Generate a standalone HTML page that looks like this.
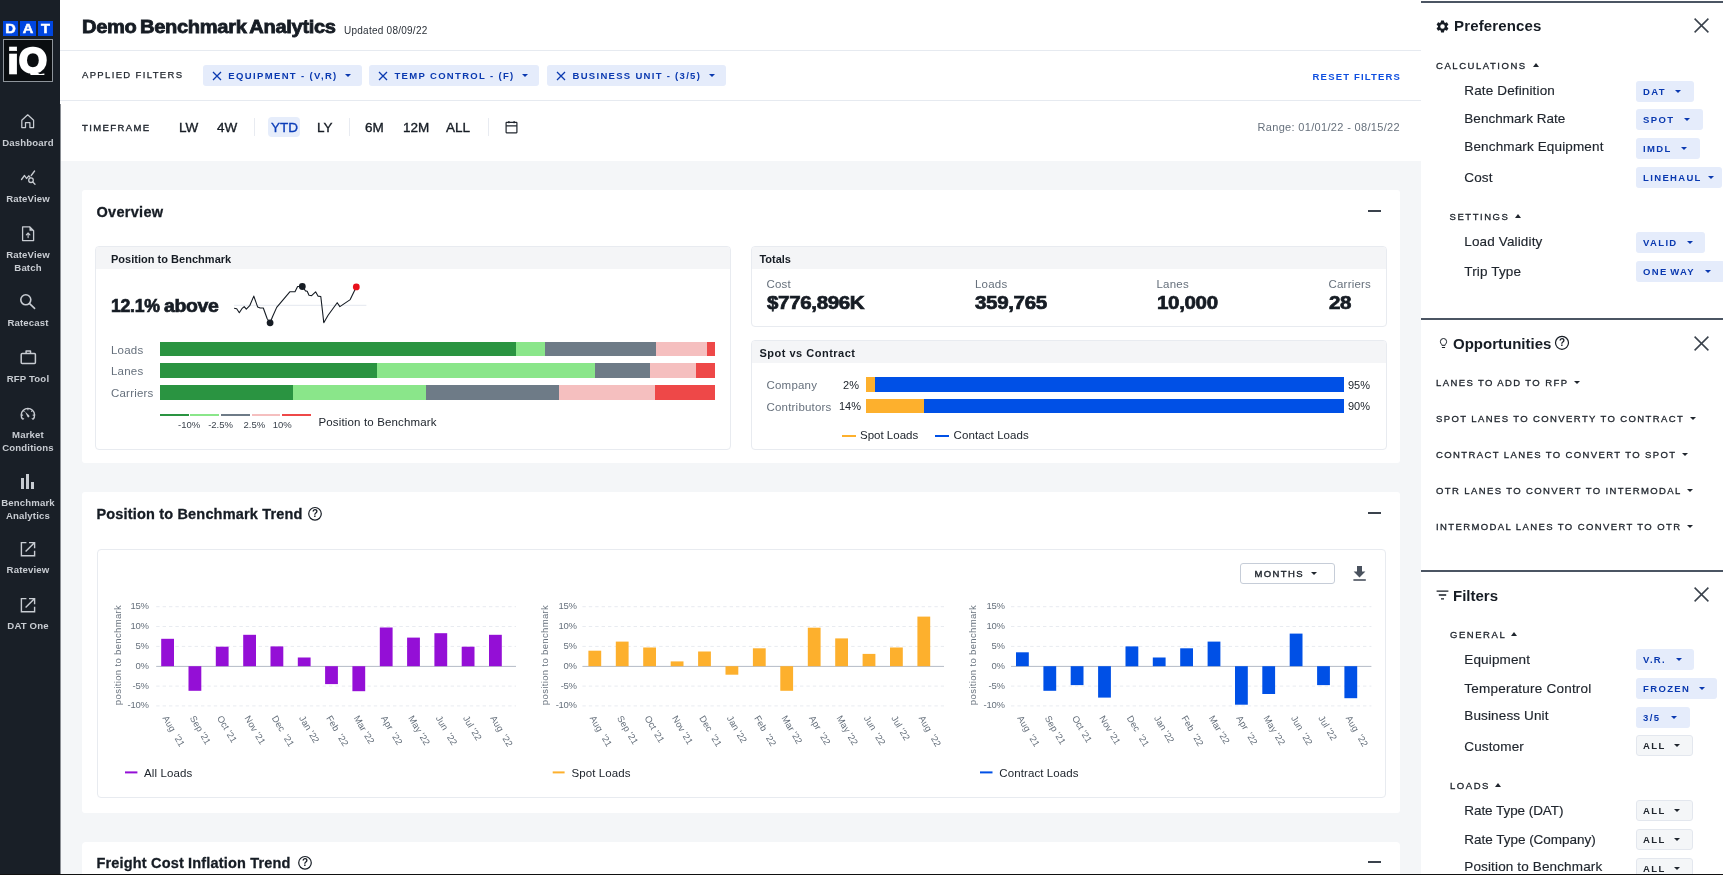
<!DOCTYPE html>
<html lang="en">
<head>
<meta charset="utf-8">
<title>Demo Benchmark Analytics</title>
<style>
*{box-sizing:border-box;margin:0;padding:0}
html,body{width:1723px;height:875px;overflow:hidden;background:#f4f6f8;font-family:"Liberation Sans",Arial,sans-serif;color:#161c24}
#app{will-change:transform;position:relative;width:1723px;height:875px;overflow:hidden}
.abs{position:absolute}
.t{position:absolute;white-space:nowrap;line-height:1}
/* sidebar */
#side{position:absolute;left:0;top:0;width:60px;height:875px;background:#191f27}
.nav{position:absolute;left:0;width:56px;text-align:center;color:#c8ccd2;font-weight:700;font-size:9.6px;line-height:13px;letter-spacing:.15px}
.nico{position:absolute;left:0;width:56px;text-align:center}
.nico svg{display:inline-block}
/* header */
#head{position:absolute;left:60px;top:0;width:1361px;height:161px;background:#fff}
.hr{position:absolute;left:0;width:1361px;height:1px;background:#e6eaf0}
.caps{font-size:9.5px;letter-spacing:1.55px;font-weight:700;color:#20262e}
.chip{position:absolute;height:21px;border-radius:3px;background:#e5ecfb;color:#0a39b0;font-size:9.5px;font-weight:700;letter-spacing:1.33px;line-height:21px;white-space:nowrap}
.chipg{position:absolute;height:21px;border-radius:3px;background:#f4f6f8;border:1px solid #e3e7ee;color:#20262e;font-size:9.5px;font-weight:700;letter-spacing:1.5px;line-height:19px;white-space:nowrap}
.tf{position:absolute;font-size:13.5px;color:#161c24;-webkit-text-stroke:.35px #161c24;top:119.5px;line-height:15px;white-space:nowrap}
.vdiv{position:absolute;width:1px;height:18px;top:118px;background:#e8ebf1}
.dn{position:absolute;top:9px;width:0;height:0;border-left:3.3px solid transparent;border-right:3.3px solid transparent;border-top:3.8px solid currentColor}
.up{position:absolute;width:0;height:0;border-left:3.5px solid transparent;border-right:3.5px solid transparent;border-bottom:4px solid currentColor}
/* cards */
.card{position:absolute;background:#fff;border-radius:3px}
.sub{position:absolute;background:#fff;border:1px solid #e8ebf0;border-radius:4px;overflow:hidden}
.subh{position:absolute;left:0;top:0;right:0;height:22px;background:#f4f5f7}
.h2{font-size:14.5px;font-weight:700;color:#161c24;letter-spacing:.3px;-webkit-text-stroke:.3px #161c24}
.sh{font-size:11px;font-weight:700;color:#161c24}
.lbl{font-size:11.5px;color:#66707c;letter-spacing:.2px}
.big{font-size:18px;font-weight:700;color:#161c24;letter-spacing:-.3px;-webkit-text-stroke:.7px #161c24;transform-origin:0 50%;transform:scaleX(1.14)}
/* right panel */
#rp{position:absolute;left:1421px;top:0;width:302px;height:875px;background:#fff}
.rb{position:absolute;left:0;width:302px;height:2px;background:#4b5563}
.rl{font-size:13.5px;color:#20262e;letter-spacing:.14px;-webkit-text-stroke:.15px #20262e}
.rt{font-size:15px;font-weight:700;color:#161c24}
</style>
</head>
<body>
<div id="app">

<!-- SIDEBAR -->
<div id="side">
<div class="abs" style="left:3px;top:21px;width:15px;height:15px;background:#0046e0"></div>
<div class="abs" style="left:20px;top:21px;width:16px;height:15px;background:#0046e0"></div>
<div class="abs" style="left:38px;top:21px;width:15px;height:15px;background:#0046e0"></div>
<div class="t" style="left:3px;top:22.3px;width:15px;text-align:center;font-size:13px;font-weight:700;color:#fff;-webkit-text-stroke:.5px #fff;transform:scaleX(1.12)">D</div>
<div class="t" style="left:20px;top:22.3px;width:16px;text-align:center;font-size:13px;font-weight:700;color:#fff;-webkit-text-stroke:.5px #fff;transform:scaleX(1.12)">A</div>
<div class="t" style="left:38px;top:22.3px;width:15px;text-align:center;font-size:13px;font-weight:700;color:#fff;-webkit-text-stroke:.5px #fff;transform:scaleX(1.12)">T</div>
<div class="abs" style="left:3px;top:39px;width:50px;height:43px;background:#0a0d10;border:1px solid #8e949b"></div>
<!--IQ--><div class="t" style="left:5.8px;top:43.5px;font-size:36px;font-weight:700;color:#fff;-webkit-text-stroke:0.5px #fff;transform-origin:0 0;transform:scaleX(1.42)">i</div><div class="abs" style="left:4px;top:40px;width:48px;height:34.6px;overflow:hidden"><div class="t" style="left:14.8px;top:2.8px;font-size:34.5px;font-weight:700;color:#fff;-webkit-text-stroke:2.5px #fff;transform-origin:0 0;transform:scaleX(1.04)">Q</div></div><!--/IQ-->

<!-- nav icons -->
<svg class="abs" style="left:20px;top:113px" width="16" height="16" viewBox="0 0 16 16" fill="none" stroke="#c8ccd2" stroke-width="1.25" stroke-linejoin="round"><path d="M1.8 7.2 L7.7 1.8 L13.6 7.2 V14.5 H9.9 V9.6 H5.5 V14.5 H1.8 Z"/></svg>
<div class="nav" style="top:136px">Dashboard</div>

<svg class="abs" style="left:20px;top:169px" width="17" height="17" viewBox="0 0 17 17" fill="none" stroke="#c8ccd2" stroke-width="1.3" stroke-linecap="round" stroke-linejoin="round"><path d="M1.5 10.5 L4.5 6.5 L6.5 9.5 L8.8 6.8 L10 8.2 M11.2 6.5 L14.6 2"/><circle cx="11" cy="11.2" r="2.3"/><path d="M12.8 13 L15 15.2"/></svg>
<div class="nav" style="top:192px">RateView</div>

<svg class="abs" style="left:21px;top:225px" width="14" height="17" viewBox="0 0 14 17" fill="none" stroke="#c8ccd2" stroke-width="1.3" stroke-linejoin="round" stroke-linecap="round"><path d="M1.6 1.8 H8.6 L12.6 5.8 V15.6 H1.6 Z"/><path d="M8.8 2.2 V5.6 H12.2 Z" fill="#c8ccd2" stroke-width=".6"/><path d="M7.1 12.6 V8.2 M5.3 9.8 L7.1 8 L8.9 9.8" stroke-width="1.1"/></svg>
<div class="nav" style="top:248px">RateView<br>Batch</div>

<svg class="abs" style="left:19px;top:293px" width="17" height="17" viewBox="0 0 17 17" fill="none" stroke="#c8ccd2" stroke-width="1.6" stroke-linecap="round"><circle cx="6.8" cy="6.8" r="5"/><path d="M10.6 10.6 L15.6 15.4"/></svg>
<div class="nav" style="top:316px">Ratecast</div>

<svg class="abs" style="left:20px;top:349px" width="17" height="16" viewBox="0 0 17 16" fill="none" stroke="#c8ccd2" stroke-width="1.5" stroke-linejoin="round"><rect x="1.2" y="4.6" width="14.2" height="10" rx="1"/><path d="M6.1 4.6 V2 H10.5 V4.6"/></svg>
<div class="nav" style="top:372px">RFP Tool</div>

<svg class="abs" style="left:20px;top:406.6px" width="16" height="16" viewBox="0 0 16 16" fill="none" stroke="#c8ccd2" stroke-width="1.4"><path d="M2.77 12.41 A6.70 6.70 0 1 1 13.03 12.41"/><path d="M1.20 8.10 L3.10 8.10 M3.16 3.36 L4.51 4.71 M7.90 1.40 L7.90 3.30 M12.64 3.36 L11.29 4.71 M14.60 8.10 L12.70 8.10 M2.77 12.41 L3.99 11.38 M13.03 12.41 L11.81 11.38 " stroke-width="1.1"/><path d="M5.0 4.6 L9.2 8.6 A1.1 1.1 0 0 1 7.6 10.1 Z" fill="#c8ccd2" stroke="none"/></svg>
<div class="nav" style="top:428px">Market<br>Conditions</div>

<div class="abs" style="left:21px;top:478px;width:3px;height:10.5px;background:#c8ccd2"></div>
<div class="abs" style="left:26px;top:474px;width:3px;height:14.5px;background:#c8ccd2"></div>
<div class="abs" style="left:31px;top:482px;width:3px;height:6.5px;background:#c8ccd2"></div>
<div class="nav" style="top:496px">Benchmark<br>Analytics</div>

<svg class="abs" style="left:20px;top:541px" width="16" height="16" viewBox="0 0 16 16" fill="none" stroke="#c8ccd2" stroke-width="1.4"><path d="M6.4 1.6 H1.4 V14.8 H14.6 V9.8"/><path d="M9 1.6 H14.6 V7.2 M14.4 1.8 L5.6 10.6"/></svg>
<div class="nav" style="top:563px">Rateview</div>

<svg class="abs" style="left:20px;top:597px" width="16" height="16" viewBox="0 0 16 16" fill="none" stroke="#c8ccd2" stroke-width="1.4"><path d="M6.4 1.6 H1.4 V14.8 H14.6 V9.8"/><path d="M9 1.6 H14.6 V7.2 M14.4 1.8 L5.6 10.6"/></svg>
<div class="nav" style="top:619px">DAT One</div>
</div>

<!-- HEADER -->
<div id="head">
<div class="t" id="title" style="left:21.6px;top:18.2px;font-size:18.5px;font-weight:700;letter-spacing:-0.3px;word-spacing:-1.5px;color:#161c24;-webkit-text-stroke:0.8px #161c24;transform-origin:0 50%;transform:scaleX(1.085)">Demo Benchmark Analytics</div>
<div class="t" id="upd" style="left:284px;top:26px;font-size:10px;letter-spacing:.25px;color:#2a3038">Updated 08/09/22</div>
<div class="hr" style="top:50px"></div>
<div class="t caps" id="af" style="left:22px;top:70px;font-weight:400;letter-spacing:1.35px;-webkit-text-stroke:.25px #20262e">APPLIED FILTERS</div>
<div class="chip" id="c1" style="left:143px;top:65px;width:159px"><svg class="abs" style="left:9px;top:6px" width="10" height="10" viewBox="0 0 10 10" stroke="#0a39b0" stroke-width="1.3" fill="none"><path d="M1 1 L9 9 M9 1 L1 9"/></svg><span class="abs" style="left:25.3px;letter-spacing:1.36px">EQUIPMENT - (V,R)</span><i class="dn" style="left:142px"></i></div>
<div class="chip" id="c2" style="left:309px;top:65px;width:170px"><svg class="abs" style="left:9px;top:6px" width="10" height="10" viewBox="0 0 10 10" stroke="#0a39b0" stroke-width="1.3" fill="none"><path d="M1 1 L9 9 M9 1 L1 9"/></svg><span class="abs" style="left:25.5px;letter-spacing:1.32px">TEMP CONTROL - (F)</span><i class="dn" style="left:153px"></i></div>
<div class="chip" id="c3" style="left:487px;top:65px;width:179px"><svg class="abs" style="left:9px;top:6px" width="10" height="10" viewBox="0 0 10 10" stroke="#0a39b0" stroke-width="1.3" fill="none"><path d="M1 1 L9 9 M9 1 L1 9"/></svg><span class="abs" style="left:25.5px;letter-spacing:1.3px">BUSINESS UNIT - (3/5)</span><i class="dn" style="left:162px"></i></div>
<div class="t caps" id="reset" style="right:20px;top:72px;color:#0f4fe0;letter-spacing:1.17px">RESET FILTERS</div>
<div class="hr" style="top:100px"></div>
<div class="t caps" id="tfl" style="left:22px;top:122.5px;font-weight:400;letter-spacing:1.4px;-webkit-text-stroke:.35px #20262e">TIMEFRAME</div>
<div class="tf" style="left:119px">LW</div>
<div class="tf" style="left:157px">4W</div>
<div class="vdiv" style="left:194px"></div>
<div class="abs" style="left:208px;top:117px;width:32px;height:20px;border-radius:4px;background:#e6edfb"></div>
<div class="tf" style="left:211px;color:#0b3db8;-webkit-text-stroke:.35px #0b3db8">YTD</div>
<div class="tf" style="left:257px">LY</div>
<div class="vdiv" style="left:289px"></div>
<div class="tf" style="left:305px">6M</div>
<div class="tf" style="left:343px">12M</div>
<div class="tf" style="left:386px">ALL</div>
<div class="vdiv" style="left:428px"></div>
<svg class="abs" style="left:445px;top:120px" width="13" height="14" viewBox="0 0 13 14" fill="none" stroke="#20262e" stroke-width="1.2"><rect x="1.1" y="2.4" width="10.8" height="10.4" rx=".5"/><path d="M1.1 5.8 H11.9 M3.9 1 V3.2 M9.1 1 V3.2"/></svg>
<div class="t" id="range" style="right:21px;top:121.5px;font-size:11px;letter-spacing:.33px;color:#66707c">Range: 01/01/22 - 08/15/22</div>
</div>

<!-- MAIN -->
<div id="main">
<!-- OVERVIEW -->
<div class="card" style="left:82px;top:190px;width:1318px;height:272.5px"></div>
<div class="t h2" style="left:96.5px;top:205px">Overview</div>
<div class="abs" style="left:1367.5px;top:210px;width:13px;height:2px;background:#3a424c"></div>

<div class="sub" style="left:95px;top:246px;width:636px;height:204px"><div class="subh"></div></div>
<div class="t sh" style="left:111px;top:253.5px;letter-spacing:.02px">Position to Benchmark</div>
<div class="t big" style="left:111px;top:297px;transform:scaleX(.98)">12.1%</div><div class="t big" style="left:164px;top:297px;transform:scaleX(1.08)">above</div>
<svg class="abs" style="left:230px;top:280px" width="150" height="52" viewBox="0 0 150 52"><path d="M4.1 25.3 H136.4" stroke="#e4e8ef" stroke-width="1"/><path d="M4.1 28.3 L6.7 28.7 L9.3 32.7 L11.9 28.7 L14.2 26.6 L16.3 29.2 L19.7 25.7 L23.8 16.1 L27.6 26.9 L30.2 28.0 L33.3 28.0 L37.2 38.8 L40.1 42.8 L42.4 37.0 L46.7 27.4 L59.8 11.8 L65.0 11.8 L67.6 6.5 L72.3 6.5 L75.5 10.9 L77.2 11.2 L79.0 15.2 L81.6 15.6 L85.6 11.8 L88.0 16.1 L90.8 16.5 L93.8 42.8 L98.1 35.3 L107.2 22.7 L109.9 26.6 L120.2 19.6 L126.3 6.9" fill="none" stroke="#161c24" stroke-width="1.1" stroke-linejoin="round"/><circle cx="40.1" cy="42.8" r="3.4" fill="#161c24"/><circle cx="72.3" cy="6.5" r="3.4" fill="#161c24"/><circle cx="126.3" cy="6.9" r="3.4" fill="#e8101c"/></svg>
<div class="t lbl" style="left:111px;top:344.7px">Loads</div>
<div class="t lbl" style="left:111px;top:366.2px">Lanes</div>
<div class="t lbl" style="left:111px;top:388px">Carriers</div>
<div class="abs" style="left:159.7px;top:342.4px;width:356.2px;height:14px;background:#2a9441"></div><div class="abs" style="left:515.9px;top:342.4px;width:29.1px;height:14px;background:#8ae68a"></div><div class="abs" style="left:545.0px;top:342.4px;width:110.7px;height:14px;background:#6e7b87"></div><div class="abs" style="left:655.7px;top:342.4px;width:51.3px;height:14px;background:#f5bfbf"></div><div class="abs" style="left:707.0px;top:342.4px;width:8.1px;height:14px;background:#ee4848"></div><div class="abs" style="left:159.7px;top:363.3px;width:217.5px;height:14.6px;background:#2a9441"></div><div class="abs" style="left:377.2px;top:363.3px;width:218.0px;height:14.6px;background:#8ae68a"></div><div class="abs" style="left:595.2px;top:363.3px;width:55.2px;height:14.6px;background:#6e7b87"></div><div class="abs" style="left:650.4px;top:363.3px;width:45.6px;height:14.6px;background:#f5bfbf"></div><div class="abs" style="left:696.0px;top:363.3px;width:19.1px;height:14.6px;background:#ee4848"></div><div class="abs" style="left:159.7px;top:385.2px;width:133.3px;height:14.5px;background:#2a9441"></div><div class="abs" style="left:293.0px;top:385.2px;width:132.9px;height:14.5px;background:#8ae68a"></div><div class="abs" style="left:425.9px;top:385.2px;width:132.9px;height:14.5px;background:#6e7b87"></div><div class="abs" style="left:558.8px;top:385.2px;width:96.2px;height:14.5px;background:#f5bfbf"></div><div class="abs" style="left:655.0px;top:385.2px;width:60.1px;height:14.5px;background:#ee4848"></div><div class="abs" style="left:159.7px;top:413.8px;width:29.1px;height:1.8px;background:#2a9441"></div><div class="abs" style="left:190.3px;top:413.8px;width:28.7px;height:1.8px;background:#8ae68a"></div><div class="abs" style="left:221.0px;top:413.8px;width:28.7px;height:1.8px;background:#6e7b87"></div><div class="abs" style="left:251.6px;top:413.8px;width:28.7px;height:1.8px;background:#f5bfbf"></div><div class="abs" style="left:282.2px;top:413.8px;width:28.8px;height:1.8px;background:#ee4848"></div><div class="t" style="left:169.2px;top:420px;width:40px;text-align:center;font-size:9.5px;color:#3c444e">-10%</div><div class="t" style="left:200.6px;top:420px;width:40px;text-align:center;font-size:9.5px;color:#3c444e">-2.5%</div><div class="t" style="left:234.3px;top:420px;width:40px;text-align:center;font-size:9.5px;color:#3c444e">2.5%</div><div class="t" style="left:262.3px;top:420px;width:40px;text-align:center;font-size:9.5px;color:#3c444e">10%</div>
<div class="t" style="left:318.5px;top:416.7px;font-size:11.5px;letter-spacing:.15px;color:#20262e">Position to Benchmark</div>

<div class="sub" style="left:751px;top:246px;width:636px;height:81px"><div class="subh"></div></div>
<div class="t sh" style="left:759.5px;top:254.2px;letter-spacing:-.05px">Totals</div>
<div class="t lbl" style="left:766.5px;top:278.5px">Cost</div><div class="t big" style="left:766.5px;top:294px">$776,896K</div>
<div class="t lbl" style="left:975px;top:278.5px">Loads</div><div class="t big" style="left:975px;top:294px">359,765</div>
<div class="t lbl" style="left:1156.5px;top:278.5px">Lanes</div><div class="t big" style="left:1156.5px;top:294px">10,000</div>
<div class="t lbl" style="left:1328.5px;top:278.5px">Carriers</div><div class="t big" style="left:1328.5px;top:294px">28</div>

<div class="sub" style="left:751px;top:340px;width:636px;height:110px"><div class="subh"></div></div>
<div class="t sh" style="left:759.5px;top:347.5px;letter-spacing:.5px">Spot vs Contract</div>
<div class="t lbl" style="left:766.5px;top:379.5px">Company</div>
<div class="t" style="left:830px;width:29px;text-align:right;top:379.5px;font-size:11px;color:#20262e">2%</div>
<div class="abs" style="left:865.5px;top:377px;width:478.5px;height:14.5px;background:#0050e6"></div>
<div class="abs" style="left:865.5px;top:377px;width:9.7px;height:14.5px;background:#fdb02d"></div>
<div class="t" style="left:1348px;top:379.5px;font-size:11px;color:#20262e">95%</div>
<div class="t lbl" style="left:766.5px;top:401.5px">Contributors</div>
<div class="t" style="left:830px;width:31px;text-align:right;top:401px;font-size:11px;color:#20262e">14%</div>
<div class="abs" style="left:865.5px;top:399px;width:478px;height:14.2px;background:#0050e6"></div>
<div class="abs" style="left:865.5px;top:399px;width:58.4px;height:14.2px;background:#fdb02d"></div>
<div class="t" style="left:1348px;top:401px;font-size:11px;color:#20262e">90%</div>
<div class="abs" style="left:842px;top:434.5px;width:14px;height:2px;background:#fdb02d"></div>
<div class="t" style="left:860px;top:429.5px;font-size:11.5px;color:#20262e">Spot Loads</div>
<div class="abs" style="left:935px;top:434.5px;width:14px;height:2px;background:#0050e6"></div>
<div class="t" style="left:953.5px;top:429.5px;font-size:11.5px;letter-spacing:.1px;color:#20262e">Contact Loads</div>
<!--TREND_START-->
<!-- TREND -->
<div class="card" style="left:82px;top:492px;width:1318px;height:320.5px"></div>
<div class="t h2" id="trt" style="left:96.5px;top:507px;letter-spacing:.17px">Position to Benchmark Trend</div>
<svg class="abs" style="left:307.3px;top:506.2px" width="16" height="16" viewBox="0 0 16 16" fill="none" stroke="#161c24" stroke-width="1.2"><circle cx="8" cy="7.8" r="6.3"/><text x="8" y="11.3" text-anchor="middle" font-size="10" font-weight="700" fill="#161c24" stroke="none" font-family="Liberation Sans,Arial,sans-serif">?</text></svg>
<div class="abs" style="left:1367.5px;top:512px;width:13px;height:2px;background:#3a424c"></div>
<div class="sub" style="left:97px;top:549px;width:1289px;height:248.5px"></div>
<div class="abs" style="left:1240px;top:563px;width:95px;height:21px;border:1px solid #c6cdd8;border-radius:3px;background:#fff"></div>
<div class="t caps" style="left:1254.5px;top:569px;letter-spacing:1.38px;font-weight:400;-webkit-text-stroke:.4px #20262e">MONTHS</div>
<i class="dn" style="left:1310.5px;top:572px;color:#20262e"></i>
<svg class="abs" style="left:1352px;top:565px" width="15" height="17" viewBox="0 0 15 17" fill="#4a525e"><path d="M5 1 H10 V6.4 H13.4 L7.5 12.4 L1.6 6.4 H5 Z"/><rect x="1.4" y="14.2" width="12.4" height="1.6"/></svg>
<svg class="abs" style="left:97px;top:549px;font-family:'Liberation Sans',Arial,sans-serif" width="1289" height="249" viewBox="97 549 1289 249"><path d="M156.2 606.7 H516.0" stroke="#e8ebf0" stroke-width="1" stroke-dasharray="3.4 3"/><path d="M156.2 626.5 H516.0" stroke="#e8ebf0" stroke-width="1" stroke-dasharray="3.4 3"/><path d="M156.2 646.4 H516.0" stroke="#e8ebf0" stroke-width="1" stroke-dasharray="3.4 3"/><path d="M156.2 686.1 H516.0" stroke="#e8ebf0" stroke-width="1" stroke-dasharray="3.4 3"/><path d="M156.2 705.9 H516.0" stroke="#e8ebf0" stroke-width="1" stroke-dasharray="3.4 3"/><text x="148.6" y="609.2" text-anchor="end" font-size="9.5" letter-spacing="-.3" fill="#66707c">15%</text><text x="148.6" y="629.0" text-anchor="end" font-size="9.5" letter-spacing="-.3" fill="#66707c">10%</text><text x="148.6" y="648.9" text-anchor="end" font-size="9.5" letter-spacing="-.3" fill="#66707c">5%</text><text x="148.6" y="668.7" text-anchor="end" font-size="9.5" letter-spacing="-.3" fill="#66707c">0%</text><text x="148.6" y="688.6" text-anchor="end" font-size="9.5" letter-spacing="-.3" fill="#66707c">-5%</text><text x="148.6" y="708.4" text-anchor="end" font-size="9.5" letter-spacing="-.3" fill="#66707c">-10%</text><text transform="translate(120.9 655) rotate(-90)" text-anchor="middle" font-size="9.5" letter-spacing=".35" fill="#66707c">position to benchmark</text><path d="M156.2 666.4 H516.0" stroke="#b4bbc6" stroke-width="1"/><rect x="161.2" y="638.8" width="12.8" height="27.4" fill="#940fd6"/><rect x="188.5" y="666.2" width="12.8" height="24.6" fill="#940fd6"/><rect x="215.8" y="646.7" width="12.8" height="19.5" fill="#940fd6"/><rect x="243.2" y="634.8" width="12.8" height="31.4" fill="#940fd6"/><rect x="270.5" y="646.4" width="12.8" height="19.9" fill="#940fd6"/><rect x="297.8" y="657.5" width="12.8" height="8.7" fill="#940fd6"/><rect x="325.1" y="666.2" width="12.8" height="17.9" fill="#940fd6"/><rect x="352.4" y="666.2" width="12.8" height="25.0" fill="#940fd6"/><rect x="379.8" y="627.5" width="12.8" height="38.7" fill="#940fd6"/><rect x="407.1" y="637.6" width="12.8" height="28.6" fill="#940fd6"/><rect x="434.4" y="633.2" width="12.8" height="33.0" fill="#940fd6"/><rect x="461.7" y="646.7" width="12.8" height="19.5" fill="#940fd6"/><rect x="489.0" y="634.8" width="12.8" height="31.4" fill="#940fd6"/><text transform="translate(162.2 718.1) rotate(59)" font-size="9.3" letter-spacing=".05" word-spacing="2.6" fill="#66707c">Aug '21</text><text transform="translate(189.5 718.1) rotate(59)" font-size="9.3" letter-spacing=".05" word-spacing="0" fill="#66707c">Sep '21</text><text transform="translate(216.8 718.1) rotate(59)" font-size="9.3" letter-spacing=".05" word-spacing="0" fill="#66707c">Oct '21</text><text transform="translate(244.2 718.1) rotate(59)" font-size="9.3" letter-spacing=".05" word-spacing="0" fill="#66707c">Nov '21</text><text transform="translate(271.5 718.1) rotate(59)" font-size="9.3" letter-spacing=".05" word-spacing="2.6" fill="#66707c">Dec '21</text><text transform="translate(298.8 718.1) rotate(59)" font-size="9.3" letter-spacing=".05" word-spacing="0" fill="#66707c">Jan '22</text><text transform="translate(326.1 718.1) rotate(59)" font-size="9.3" letter-spacing=".05" word-spacing="2.6" fill="#66707c">Feb '22</text><text transform="translate(353.4 718.1) rotate(59)" font-size="9.3" letter-spacing=".05" word-spacing="0" fill="#66707c">Mar '22</text><text transform="translate(380.8 718.1) rotate(59)" font-size="9.3" letter-spacing=".05" word-spacing="2.6" fill="#66707c">Apr '22</text><text transform="translate(408.1 718.1) rotate(59)" font-size="9.3" letter-spacing=".05" word-spacing="0" fill="#66707c">May '22</text><text transform="translate(435.4 718.1) rotate(59)" font-size="9.3" letter-spacing=".05" word-spacing="2.6" fill="#66707c">Jun '22</text><text transform="translate(462.7 718.1) rotate(59)" font-size="9.3" letter-spacing=".05" word-spacing="0" fill="#66707c">Jul '22</text><text transform="translate(490.0 718.1) rotate(59)" font-size="9.3" letter-spacing=".05" word-spacing="2.6" fill="#66707c">Aug '22</text><path d="M125.0 772.4 H137.4" stroke="#940fd6" stroke-width="2"/><text x="144.1" y="776.5" font-size="11.5" letter-spacing=".1" fill="#20262e">All Loads</text><path d="M582.4 606.7 H944.0" stroke="#e8ebf0" stroke-width="1" stroke-dasharray="3.4 3"/><path d="M582.4 626.5 H944.0" stroke="#e8ebf0" stroke-width="1" stroke-dasharray="3.4 3"/><path d="M582.4 646.4 H944.0" stroke="#e8ebf0" stroke-width="1" stroke-dasharray="3.4 3"/><path d="M582.4 686.1 H944.0" stroke="#e8ebf0" stroke-width="1" stroke-dasharray="3.4 3"/><path d="M582.4 705.9 H944.0" stroke="#e8ebf0" stroke-width="1" stroke-dasharray="3.4 3"/><text x="576.7" y="609.2" text-anchor="end" font-size="9.5" letter-spacing="-.3" fill="#66707c">15%</text><text x="576.7" y="629.0" text-anchor="end" font-size="9.5" letter-spacing="-.3" fill="#66707c">10%</text><text x="576.7" y="648.9" text-anchor="end" font-size="9.5" letter-spacing="-.3" fill="#66707c">5%</text><text x="576.7" y="668.7" text-anchor="end" font-size="9.5" letter-spacing="-.3" fill="#66707c">0%</text><text x="576.7" y="688.6" text-anchor="end" font-size="9.5" letter-spacing="-.3" fill="#66707c">-5%</text><text x="576.7" y="708.4" text-anchor="end" font-size="9.5" letter-spacing="-.3" fill="#66707c">-10%</text><text transform="translate(547.9 655) rotate(-90)" text-anchor="middle" font-size="9.5" letter-spacing=".35" fill="#66707c">position to benchmark</text><path d="M582.4 666.4 H944.0" stroke="#b4bbc6" stroke-width="1"/><rect x="588.4" y="650.7" width="12.8" height="15.5" fill="#fdb02d"/><rect x="615.8" y="641.6" width="12.8" height="24.6" fill="#fdb02d"/><rect x="643.2" y="647.5" width="12.8" height="18.7" fill="#fdb02d"/><rect x="670.7" y="661.4" width="12.8" height="4.8" fill="#fdb02d"/><rect x="698.1" y="651.5" width="12.8" height="14.7" fill="#fdb02d"/><rect x="725.5" y="666.2" width="12.8" height="8.5" fill="#fdb02d"/><rect x="752.9" y="648.3" width="12.8" height="17.9" fill="#fdb02d"/><rect x="780.3" y="666.2" width="12.8" height="24.6" fill="#fdb02d"/><rect x="807.8" y="627.7" width="12.8" height="38.5" fill="#fdb02d"/><rect x="835.2" y="638.4" width="12.8" height="27.8" fill="#fdb02d"/><rect x="862.6" y="653.9" width="12.8" height="12.3" fill="#fdb02d"/><rect x="890.0" y="647.5" width="12.8" height="18.7" fill="#fdb02d"/><rect x="917.4" y="616.6" width="12.8" height="49.6" fill="#fdb02d"/><text transform="translate(589.4 718.1) rotate(59)" font-size="9.3" letter-spacing=".05" word-spacing="2.6" fill="#66707c">Aug '21</text><text transform="translate(616.8 718.1) rotate(59)" font-size="9.3" letter-spacing=".05" word-spacing="0" fill="#66707c">Sep '21</text><text transform="translate(644.2 718.1) rotate(59)" font-size="9.3" letter-spacing=".05" word-spacing="0" fill="#66707c">Oct '21</text><text transform="translate(671.7 718.1) rotate(59)" font-size="9.3" letter-spacing=".05" word-spacing="0" fill="#66707c">Nov '21</text><text transform="translate(699.1 718.1) rotate(59)" font-size="9.3" letter-spacing=".05" word-spacing="2.6" fill="#66707c">Dec '21</text><text transform="translate(726.5 718.1) rotate(59)" font-size="9.3" letter-spacing=".05" word-spacing="0" fill="#66707c">Jan '22</text><text transform="translate(753.9 718.1) rotate(59)" font-size="9.3" letter-spacing=".05" word-spacing="2.6" fill="#66707c">Feb '22</text><text transform="translate(781.3 718.1) rotate(59)" font-size="9.3" letter-spacing=".05" word-spacing="0" fill="#66707c">Mar '22</text><text transform="translate(808.8 718.1) rotate(59)" font-size="9.3" letter-spacing=".05" word-spacing="2.6" fill="#66707c">Apr '22</text><text transform="translate(836.2 718.1) rotate(59)" font-size="9.3" letter-spacing=".05" word-spacing="0" fill="#66707c">May '22</text><text transform="translate(863.6 718.1) rotate(59)" font-size="9.3" letter-spacing=".05" word-spacing="2.6" fill="#66707c">Jun '22</text><text transform="translate(891.0 718.1) rotate(59)" font-size="9.3" letter-spacing=".05" word-spacing="0" fill="#66707c">Jul '22</text><text transform="translate(918.4 718.1) rotate(59)" font-size="9.3" letter-spacing=".05" word-spacing="2.6" fill="#66707c">Aug '22</text><path d="M552.7 772.4 H564.6" stroke="#fdb02d" stroke-width="2"/><text x="571.4" y="776.5" font-size="11.5" letter-spacing=".1" fill="#20262e">Spot Loads</text><path d="M1011.0 606.7 H1371.4" stroke="#e8ebf0" stroke-width="1" stroke-dasharray="3.4 3"/><path d="M1011.0 626.5 H1371.4" stroke="#e8ebf0" stroke-width="1" stroke-dasharray="3.4 3"/><path d="M1011.0 646.4 H1371.4" stroke="#e8ebf0" stroke-width="1" stroke-dasharray="3.4 3"/><path d="M1011.0 686.1 H1371.4" stroke="#e8ebf0" stroke-width="1" stroke-dasharray="3.4 3"/><path d="M1011.0 705.9 H1371.4" stroke="#e8ebf0" stroke-width="1" stroke-dasharray="3.4 3"/><text x="1004.6" y="609.2" text-anchor="end" font-size="9.5" letter-spacing="-.3" fill="#66707c">15%</text><text x="1004.6" y="629.0" text-anchor="end" font-size="9.5" letter-spacing="-.3" fill="#66707c">10%</text><text x="1004.6" y="648.9" text-anchor="end" font-size="9.5" letter-spacing="-.3" fill="#66707c">5%</text><text x="1004.6" y="668.7" text-anchor="end" font-size="9.5" letter-spacing="-.3" fill="#66707c">0%</text><text x="1004.6" y="688.6" text-anchor="end" font-size="9.5" letter-spacing="-.3" fill="#66707c">-5%</text><text x="1004.6" y="708.4" text-anchor="end" font-size="9.5" letter-spacing="-.3" fill="#66707c">-10%</text><text transform="translate(975.5 655) rotate(-90)" text-anchor="middle" font-size="9.5" letter-spacing=".35" fill="#66707c">position to benchmark</text><path d="M1011.0 666.4 H1371.4" stroke="#b4bbc6" stroke-width="1"/><rect x="1016.0" y="652.3" width="12.8" height="13.9" fill="#0050e6"/><rect x="1043.4" y="666.2" width="12.8" height="24.6" fill="#0050e6"/><rect x="1070.7" y="666.2" width="12.8" height="18.9" fill="#0050e6"/><rect x="1098.1" y="666.2" width="12.8" height="31.4" fill="#0050e6"/><rect x="1125.5" y="646.4" width="12.8" height="19.9" fill="#0050e6"/><rect x="1152.8" y="657.5" width="12.8" height="8.7" fill="#0050e6"/><rect x="1180.2" y="648.3" width="12.8" height="17.9" fill="#0050e6"/><rect x="1207.6" y="641.6" width="12.8" height="24.6" fill="#0050e6"/><rect x="1235.0" y="666.2" width="12.8" height="38.5" fill="#0050e6"/><rect x="1262.3" y="666.2" width="12.8" height="27.8" fill="#0050e6"/><rect x="1289.7" y="633.6" width="12.8" height="32.6" fill="#0050e6"/><rect x="1317.1" y="666.2" width="12.8" height="18.9" fill="#0050e6"/><rect x="1344.4" y="666.2" width="12.8" height="32.0" fill="#0050e6"/><text transform="translate(1017.0 718.1) rotate(59)" font-size="9.3" letter-spacing=".05" word-spacing="2.6" fill="#66707c">Aug '21</text><text transform="translate(1044.4 718.1) rotate(59)" font-size="9.3" letter-spacing=".05" word-spacing="0" fill="#66707c">Sep '21</text><text transform="translate(1071.7 718.1) rotate(59)" font-size="9.3" letter-spacing=".05" word-spacing="0" fill="#66707c">Oct '21</text><text transform="translate(1099.1 718.1) rotate(59)" font-size="9.3" letter-spacing=".05" word-spacing="0" fill="#66707c">Nov '21</text><text transform="translate(1126.5 718.1) rotate(59)" font-size="9.3" letter-spacing=".05" word-spacing="2.6" fill="#66707c">Dec '21</text><text transform="translate(1153.8 718.1) rotate(59)" font-size="9.3" letter-spacing=".05" word-spacing="0" fill="#66707c">Jan '22</text><text transform="translate(1181.2 718.1) rotate(59)" font-size="9.3" letter-spacing=".05" word-spacing="2.6" fill="#66707c">Feb '22</text><text transform="translate(1208.6 718.1) rotate(59)" font-size="9.3" letter-spacing=".05" word-spacing="0" fill="#66707c">Mar '22</text><text transform="translate(1236.0 718.1) rotate(59)" font-size="9.3" letter-spacing=".05" word-spacing="2.6" fill="#66707c">Apr '22</text><text transform="translate(1263.3 718.1) rotate(59)" font-size="9.3" letter-spacing=".05" word-spacing="0" fill="#66707c">May '22</text><text transform="translate(1290.7 718.1) rotate(59)" font-size="9.3" letter-spacing=".05" word-spacing="2.6" fill="#66707c">Jun '22</text><text transform="translate(1318.1 718.1) rotate(59)" font-size="9.3" letter-spacing=".05" word-spacing="0" fill="#66707c">Jul '22</text><text transform="translate(1345.4 718.1) rotate(59)" font-size="9.3" letter-spacing=".05" word-spacing="2.6" fill="#66707c">Aug '22</text><path d="M980.0 772.4 H992.5" stroke="#0050e6" stroke-width="2"/><text x="999.3" y="776.5" font-size="11.5" letter-spacing=".1" fill="#20262e">Contract Loads</text></svg>

<!-- FREIGHT -->
<div class="card" style="left:82px;top:842px;width:1318px;height:40px;border-radius:4px"></div>
<div class="t h2" id="frt" style="left:96.5px;top:856px;letter-spacing:.17px">Freight Cost Inflation Trend</div>
<svg class="abs" style="left:296.8px;top:855.2px" width="16" height="16" viewBox="0 0 16 16" fill="none" stroke="#161c24" stroke-width="1.2"><circle cx="8" cy="7.8" r="6.3"/><text x="8" y="11.3" text-anchor="middle" font-size="10" font-weight="700" fill="#161c24" stroke="none" font-family="Liberation Sans,Arial,sans-serif">?</text></svg>
<div class="abs" style="left:1367.5px;top:861px;width:13px;height:2px;background:#3a424c"></div>
<!--TREND_END-->
</div>

<!-- RIGHT PANEL -->
<div id="rp"><!--RP_START--><div class="rb" style="top:0.5px"></div><svg class="abs" style="left:14.2px;top:18.9px" width="15" height="15" viewBox="0 0 24 24" fill="#161c24"><path d="M19.14 12.94c.04-.3.06-.61.06-.94 0-.32-.02-.64-.07-.94l2.03-1.58a.49.49 0 0 0 .12-.61l-1.92-3.32a.49.49 0 0 0-.59-.22l-2.39.96c-.5-.38-1.03-.7-1.62-.94l-.36-2.54a.48.48 0 0 0-.48-.41h-3.84c-.24 0-.43.17-.47.41l-.36 2.54c-.59.24-1.13.57-1.62.94l-2.39-.96a.48.48 0 0 0-.59.22L2.74 8.87c-.12.21-.08.47.12.61l2.03 1.58c-.05.3-.09.63-.09.94s.02.64.07.94l-2.03 1.58a.49.49 0 0 0-.12.61l1.92 3.32c.12.22.37.29.59.22l2.39-.96c.5.38 1.03.7 1.62.94l.36 2.54c.05.24.24.41.48.41h3.84c.24 0 .44-.17.47-.41l.36-2.54c.59-.24 1.13-.56 1.62-.94l2.39.96c.22.08.47 0 .59-.22l1.92-3.32c.12-.22.07-.47-.12-.61l-2.01-1.58zM12 15.6A3.6 3.6 0 1 1 12 8.4a3.6 3.6 0 0 1 0 7.2z"/></svg><div class="t rt" style="left:33px;top:18px;letter-spacing:.15px">Preferences</div><svg class="abs" style="left:271.8px;top:17.3px" width="17" height="17" viewBox="0 0 17 17" fill="none" stroke="#3a424c" stroke-width="1.5"><path d="M1.6 1.6 L15.4 15.4 M15.4 1.6 L1.6 15.4"/></svg><div class="t caps" style="left:15px;top:60.7px;font-weight:400;-webkit-text-stroke:.3px #20262e">CALCULATIONS</div><i class="up" style="left:111.8px;top:62.7px;color:#20262e"></i><div class="t rl" style="left:43.3px;top:84.1px">Rate Definition</div><div class="chip" style="left:214.5px;top:81px;width:58px"><span class="abs" style="left:7.6px">DAT</span><i class="dn" style="left:39.8px;top:9px"></i></div><div class="t rl" style="left:43.3px;top:112.1px;letter-spacing:0.04px">Benchmark Rate</div><div class="chip" style="left:214.5px;top:109px;width:67px"><span class="abs" style="left:7.6px">SPOT</span><i class="dn" style="left:48.8px;top:9px"></i></div><div class="t rl" style="left:43.3px;top:140.1px">Benchmark Equipment</div><div class="chip" style="left:214.5px;top:138px;width:64px"><span class="abs" style="left:7.6px">IMDL</span><i class="dn" style="left:45.8px;top:9px"></i></div><div class="t rl" style="left:43.3px;top:170.6px">Cost</div><div class="chip" style="left:214.5px;top:167px;width:86.2px"><span class="abs" style="left:7.6px">LINEHAUL</span><i class="dn" style="left:72.6px;top:9px"></i></div><div class="t caps" style="left:28.5px;top:211.5px;font-weight:400;-webkit-text-stroke:.3px #20262e">SETTINGS</div><i class="up" style="left:93.5px;top:213.5px;color:#20262e"></i><div class="t rl" style="left:43.3px;top:235.1px">Load Validity</div><div class="chip" style="left:214.5px;top:232px;width:69.5px"><span class="abs" style="left:7.6px">VALID</span><i class="dn" style="left:51.3px;top:9px"></i></div><div class="t rl" style="left:43.3px;top:264.6px">Trip Type</div><div class="chip" style="left:214.5px;top:261px;width:89px"><span class="abs" style="left:7.6px;word-spacing:-1.4px">ONE WAY</span><i class="dn" style="left:69.9px;top:9px"></i></div><div class="rb" style="top:318px"></div><svg class="abs" style="left:17px;top:337px" width="10" height="12" viewBox="0 0 10 12" fill="none" stroke="#161c24" stroke-width="1"><path d="M3.9 8.3 C3.9 7.2 2.4 6.6 2.4 4.6 A3.1 3.1 0 0 1 8.6 4.6 C8.6 6.6 7.1 7.2 7.1 8.3 Z"/><path d="M3.9 10.5 H7.1"/></svg><div class="t rt" style="left:32px;top:335.5px">Opportunities</div><svg class="abs" style="left:133.1px;top:335px" width="16" height="16" viewBox="0 0 16 16" fill="none" stroke="#161c24" stroke-width="1.2"><circle cx="8" cy="7.8" r="6.5"/><text x="8" y="11.4" text-anchor="middle" font-size="10" font-weight="700" fill="#161c24" stroke="none" font-family="Liberation Sans,Arial,sans-serif">?</text></svg><svg class="abs" style="left:271.8px;top:334.8px" width="17" height="17" viewBox="0 0 17 17" fill="none" stroke="#3a424c" stroke-width="1.5"><path d="M1.6 1.6 L15.4 15.4 M15.4 1.6 L1.6 15.4"/></svg><div class="t caps" style="letter-spacing:1.39px;left:15px;top:378.1px;font-weight:400;-webkit-text-stroke:.3px #20262e">LANES TO ADD TO RFP</div><i class="dn" style="left:153.2px;top:380.9px;color:#20262e"></i><div class="t caps" style="letter-spacing:1.39px;left:15px;top:414.4px;font-weight:400;-webkit-text-stroke:.3px #20262e">SPOT LANES TO CONVERTY TO CONTRACT</div><i class="dn" style="left:268.8px;top:417.2px;color:#20262e"></i><div class="t caps" style="letter-spacing:1.39px;left:15px;top:450.3px;font-weight:400;-webkit-text-stroke:.3px #20262e">CONTRACT LANES TO CONVERT TO SPOT</div><i class="dn" style="left:260.8px;top:453.1px;color:#20262e"></i><div class="t caps" style="letter-spacing:1.39px;left:15px;top:486.3px;font-weight:400;-webkit-text-stroke:.3px #20262e">OTR LANES TO CONVERT TO INTERMODAL</div><i class="dn" style="left:266.1px;top:489.1px;color:#20262e"></i><div class="t caps" style="letter-spacing:1.39px;left:15px;top:521.9px;font-weight:400;-webkit-text-stroke:.3px #20262e">INTERMODAL LANES TO CONVERT TO OTR</div><i class="dn" style="left:266.1px;top:524.7px;color:#20262e"></i><div class="rb" style="top:570px"></div><svg class="abs" style="left:15px;top:590px" width="13" height="10" viewBox="0 0 13 10" fill="none" stroke="#161c24" stroke-width="1.3"><path d="M.6 1.2 H12.4 M2.8 5 H10.2 M5 8.8 H8"/></svg><div class="t rt" style="left:32px;top:587.5px">Filters</div><svg class="abs" style="left:271.8px;top:586.3px" width="17" height="17" viewBox="0 0 17 17" fill="none" stroke="#3a424c" stroke-width="1.5"><path d="M1.6 1.6 L15.4 15.4 M15.4 1.6 L1.6 15.4"/></svg><div class="t caps" style="left:29px;top:629.5px;font-weight:400;-webkit-text-stroke:.3px #20262e">GENERAL</div><i class="up" style="left:89.5px;top:631.5px;color:#20262e"></i><div class="t rl" style="left:43.3px;top:653.1px">Equipment</div><div class="chip" style="left:214.5px;top:649px;width:58.5px"><span class="abs" style="left:7.6px">V.R.</span><i class="dn" style="left:40.3px;top:9px"></i></div><div class="t rl" style="left:43.3px;top:681.6px;letter-spacing:0.22px">Temperature Control</div><div class="chip" style="left:214.5px;top:678px;width:81.5px"><span class="abs" style="left:7.6px">FROZEN</span><i class="dn" style="left:63.3px;top:9px"></i></div><div class="t rl" style="left:43.3px;top:709.1px">Business Unit</div><div class="chip" style="left:214.5px;top:706.7px;width:54px"><span class="abs" style="left:7.6px">3/5</span><i class="dn" style="left:35.8px;top:9px"></i></div><div class="t rl" style="left:43.3px;top:739.6px">Customer</div><div class="chipg" style="left:214.5px;top:735px;width:57.5px"><span class="abs" style="left:6.4px">ALL</span><i class="dn" style="left:37.9px;top:8px"></i></div><div class="t caps" style="left:29px;top:780.5px;font-weight:400;-webkit-text-stroke:.3px #20262e">LOADS</div><i class="up" style="left:74px;top:782.5px;color:#20262e"></i><div class="t rl" style="left:43.3px;top:804.1px;letter-spacing:-0.06px">Rate Type (DAT)</div><div class="chipg" style="left:214.5px;top:800px;width:57.5px"><span class="abs" style="left:6.4px">ALL</span><i class="dn" style="left:37.9px;top:8px"></i></div><div class="t rl" style="left:43.3px;top:832.6px;letter-spacing:-0.02px">Rate Type (Company)</div><div class="chipg" style="left:214.5px;top:828.7px;width:57.5px"><span class="abs" style="left:6.4px">ALL</span><i class="dn" style="left:37.9px;top:8px"></i></div><div class="t rl" style="left:43.3px;top:859.6px">Position to Benchmark</div><div class="chipg" style="left:214.5px;top:857.5px;width:57.5px"><span class="abs" style="left:6.4px">ALL</span><i class="dn" style="left:37.9px;top:8px"></i></div><!--RP_END--></div>

<div class="abs" id="sedge" style="left:60px;top:104px;width:1px;height:771px;background:#8a8e94"></div>
<div class="abs" style="left:0;top:874px;width:1723px;height:1px;background:#111"></div>
</div>
</body>
</html>
